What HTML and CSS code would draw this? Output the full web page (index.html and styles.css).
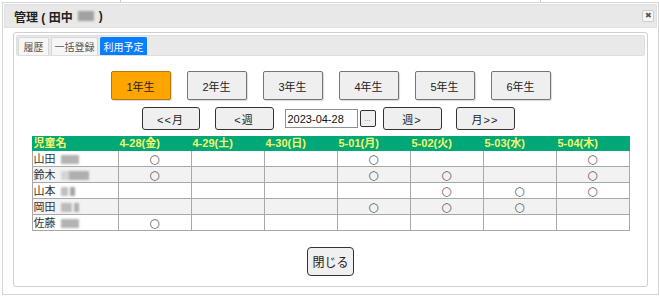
FILE: index.html
```html
<!DOCTYPE html>
<html lang="ja">
<head>
<meta charset="utf-8">
<link rel="stylesheet" href="styles.css">
</head>
<body>
<div class="bgline bgline-a"></div>
<div class="bgline bgline-b"></div>
<div class="dialog">
  <div class="titlebar">
    <span class="title">管理 ( 田中 <span class="blur blur-title"></span> )</span>
    <button class="xbtn" aria-label="close">✖</button>
  </div>
  <div class="panel">
    <div class="tabs">
      <span class="tab">履歴</span>
      <span class="tab">一括登録</span>
      <span class="tab active">利用予定</span>
    </div>
    <div class="content">
      <div class="grades">
        <button class="grade on">1年生</button>
        <button class="grade">2年生</button>
        <button class="grade">3年生</button>
        <button class="grade">4年生</button>
        <button class="grade">5年生</button>
        <button class="grade">6年生</button>
      </div>
      <div class="nav">
        <button class="navbtn">&lt;&lt;月</button>
        <button class="navbtn">&lt;週</button>
        <span class="datebox"><span class="dateinput">2023-04-28</span><button class="dots">...</button></span>
        <button class="navbtn">週&gt;</button>
        <button class="navbtn">月&gt;&gt;</button>
      </div>
      <table class="sched">
        <thead>
          <tr><th class="namecol">児童名</th><th>4-28(金)</th><th>4-29(土)</th><th>4-30(日)</th><th>5-01(月)</th><th>5-02(火)</th><th>5-03(水)</th><th>5-04(木)</th></tr>
        </thead>
        <tbody>
          <tr><td class="name">山田 <span class="blur b1"></span></td><td>○</td><td></td><td></td><td>○</td><td></td><td></td><td>○</td></tr>
          <tr class="alt"><td class="name">鈴木 <span class="blur b2"></span></td><td>○</td><td></td><td></td><td>○</td><td>○</td><td></td><td>○</td></tr>
          <tr><td class="name">山本 <span class="blur b3"></span></td><td></td><td></td><td></td><td></td><td>○</td><td>○</td><td>○</td></tr>
          <tr class="alt"><td class="name">岡田 <span class="blur b4"></span></td><td></td><td></td><td></td><td>○</td><td>○</td><td>○</td><td></td></tr>
          <tr><td class="name">佐藤 <span class="blur b1"></span></td><td>○</td><td></td><td></td><td></td><td></td><td></td><td></td></tr>
        </tbody>
      </table>
      <div class="footer">
        <button class="closebtn">閉じる</button>
      </div>
    </div>
  </div>
</div>
</body>
</html>
```
FILE: styles.css
```css
* { box-sizing: border-box; }
html, body { margin: 0; padding: 0; background: #fff; }
body {
  font-family: "Liberation Sans", "Noto Sans CJK JP", sans-serif;
  font-size: 12px;
  color: #222;
  width: 659px;
  height: 297px;
  overflow: hidden;
  position: relative;
}
.bgline { position: absolute; top: 0; width: 1px; height: 3px; background: #ccc; }
.bgline-a { left: 120px; }
.bgline-b { left: 540px; }

.dialog {
  position: relative;
  margin: 2px 0 0 2px;
  width: 657px;
  height: 293px;
  border: 1px solid #d6d6d6;
  padding: 1px;
  background: #fff;
}
.titlebar {
  height: 24px;
  background: #e8e8e8;
  border: 1px solid #e0e0e0;
  display: flex;
  align-items: center;
  justify-content: space-between;
  padding: 0 2px 0 9px;
}
.title { font-weight: bold; font-size: 12px; color: #222; display: flex; align-items: center; gap: 3px; }
.blur { display: inline-block; background: #9a9a9a; filter: blur(1.2px); opacity: 0.75; }
.blur-title { width: 16px; height: 10px; margin: 0 2px; background: #8a8a8a; }
.xbtn {
  width: 12px; height: 12px; padding: 0; margin: 0;
  border: 1px solid #ccc; background: #f6f6f6; border-radius: 2px;
  font-size: 8px; line-height: 10px; color: #555;
  display: flex; align-items: center; justify-content: center;
}
.panel {
  margin: 4px 9px 0 9px;
  height: 255px;
  border: 1px solid #d0d0d0;
  border-radius: 3px;
  padding: 2px;
}
.tabs {
  height: 21px;
  background: #e9e9e9;
  border: 1px solid #dedede;
  border-radius: 2px;
  display: flex;
  align-items: flex-end;
  gap: 2px;
  padding-left: 1px;
}
.tab {
  height: 18px;
  padding: 0;
  white-space: nowrap;
  display: flex; align-items: center; justify-content: center;
  font-size: 10px;
  color: #555;
  background: #f6f6f6;
  border: 1px solid #d6d6d6;
  border-bottom: none;
  border-radius: 2px 2px 0 0;
}
.tab:nth-child(1) { width: 31px; }
.tab:nth-child(2) { width: 47px; }
.tab.active { width: 47px; background: #087eff; color: #fff; border-color: #087eff; }

.content { display: flex; flex-direction: column; align-items: center; }
.grades { display: flex; gap: 16px; margin-top: 15px; }
.grade {
  width: 60px; height: 29px;
  font-family: "Liberation Sans", "Noto Sans CJK JP", sans-serif;
  font-size: 11px; color: #222;
  background: #efefef;
  border: 1px solid #767676;
  border-radius: 2px;
  box-shadow: 1px 1px 1px rgba(0,0,0,0.15);
  padding: 0;
}
.grade.on { background: #ffa500; border-color: #b07a10; }
.nav { display: flex; align-items: center; margin-top: 7px; margin-right: 5px; }
.navbtn {
  width: 59px; height: 23px;
  font-family: "Liberation Sans", "Noto Sans CJK JP", sans-serif;
  font-size: 11px; color: #222;
  background: #efefef;
  border: 1.5px solid #333;
  border-radius: 3px;
  padding: 0;
  margin-right: 14px;
  letter-spacing: 1px;
}
.navbtn:first-child { width: 58px; margin-right: 15px; }
.navbtn:nth-child(2) { margin-right: 11px; }
.navbtn:last-child { margin-right: 0; }
.datebox { display: flex; align-items: center; margin-right: 7px; }
.dateinput {
  width: 73px; height: 19px;
  border: 1px solid #8f8f8f;
  font-size: 11px;
  padding-left: 2px;
  display: flex; align-items: center;
  color: #111;
}
.dots {
  width: 16px; height: 17px; margin-left: 2px;
  border: 1.5px solid #333; border-radius: 2px;
  background: #efefef; color: #888;
  font-size: 8px; padding: 0; line-height: 10px;
}
.sched {
  margin-top: 6px;
  width: 598px;
  border-collapse: collapse;
  table-layout: fixed;
  font-size: 11px;
}
.sched th {
  background: #00a878;
  color: #f4f56a;
  font-weight: bold;
  text-align: left;
  height: 14px;
  padding: 0 1px;
  border: 1px solid #00a878;
  border-left: 1px solid #c8c8c8;
  line-height: 13px;
  font-size: 11px;
}
.sched th:first-child { border-left-color: #00a878; }
.sched th.namecol { width: 86px; }
.sched td {
  height: 16px;
  border: 1px solid #a8a8a8;
  text-align: center;
  padding: 0;
  color: #555;
  font-size: 12px;
  line-height: 14px;
  font-family: "DejaVu Sans", sans-serif;
}
.sched td.name {
  text-align: left;
  padding-left: 1px;
  color: #333;
  font-size: 11px;
  font-family: "Liberation Sans", "Noto Sans CJK JP", sans-serif;
}
.sched tr.alt td { background: #f2f2f2; }
.name .blur { height: 9px; vertical-align: -1px; }
.b1 { width: 18px; margin-left: 2px; }
.b2 { width: 28px; margin-left: 2px; background: linear-gradient(90deg, #ccc 0 30%, #999 30% 100%); }
.b3 { width: 14px; margin-left: 2px; background: linear-gradient(90deg, #aaa 0 50%, #fff 50% 65%, #888 65% 100%); }
.b4 { width: 18px; margin-left: 2px; background: linear-gradient(90deg, #aaa 0 60%, #fff 60% 70%, #999 70% 100%); }

.footer { margin-top: 16px; display: flex; justify-content: center; }
.closebtn {
  width: 47px; height: 29px;
  font-family: "Liberation Sans", "Noto Sans CJK JP", sans-serif;
  font-size: 12px; color: #222;
  background: #f0f0f0;
  border: 1.5px solid #333;
  border-radius: 4px;
  padding: 0;
}
```
